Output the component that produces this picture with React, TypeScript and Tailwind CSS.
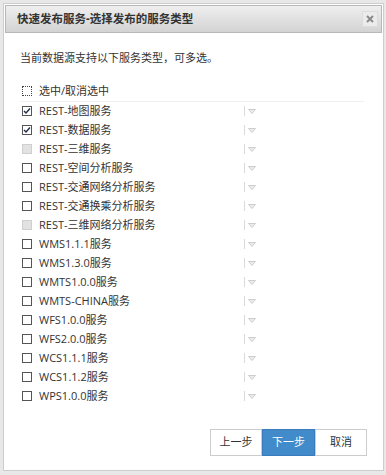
import React from 'react';

type Item = { label: string; state: 'on' | 'off' | 'disabled' };

const items: Item[] = [
  { label: 'REST-地图服务', state: 'on' },
  { label: 'REST-数据服务', state: 'on' },
  { label: 'REST-三维服务', state: 'disabled' },
  { label: 'REST-空间分析服务', state: 'off' },
  { label: 'REST-交通网络分析服务', state: 'off' },
  { label: 'REST-交通换乘分析服务', state: 'off' },
  { label: 'REST-三维网络分析服务', state: 'disabled' },
  { label: 'WMS1.1.1服务', state: 'off' },
  { label: 'WMS1.3.0服务', state: 'off' },
  { label: 'WMTS1.0.0服务', state: 'off' },
  { label: 'WMTS-CHINA服务', state: 'off' },
  { label: 'WFS1.0.0服务', state: 'off' },
  { label: 'WFS2.0.0服务', state: 'off' },
  { label: 'WCS1.1.1服务', state: 'off' },
  { label: 'WCS1.1.2服务', state: 'off' },
  { label: 'WPS1.0.0服务', state: 'off' },
];

const Box: React.FC<{ state: Item['state'] | 'focus' }> = ({ state }) => {
  if (state === 'disabled') {
    return <span className="block w-[10px] h-[10px] border border-[#cfcfcf] bg-[#e2e2e2]" />;
  }
  if (state === 'focus') {
    return <span className="block w-[10px] h-[10px] border border-dotted border-[#444]" />;
  }
  return (
    <span className="flex items-center justify-center w-[10px] h-[10px] border border-[#555] bg-white">
      {state === 'on' && (
        <svg width="8" height="8" viewBox="0 0 8 8">
          <path d="M1 4 L3 6 L7 1.5" fill="none" stroke="#1f2d4a" strokeWidth="1.4" />
        </svg>
      )}
    </span>
  );
};

const Caret = () => (
  <div className="flex items-center gap-[3px]">
    <span className="block w-px h-[10px] bg-[#dadada]" />
    <svg width="8" height="5" viewBox="0 0 8 5">
      <path d="M0.5 0.5 L7.5 0.5 L4 4.5 Z" fill="#ececec" stroke="#cdcdcd" strokeWidth="1" />
    </svg>
  </div>
);

export default function App() {
  return (
    <div
      className="w-[386px] h-[475px] bg-[#e8e8e8] pt-[3px] pl-[3px] pr-[2px] pb-[4px] text-[#333]"
      style={{ fontFamily: '"Open Sans", "Noto Sans CJK SC", sans-serif' }}
    >
      <div className="h-full bg-white border border-[#cdcdcd] p-px flex flex-col">
        {/* Title bar */}
        <div className="h-[28px] flex items-center justify-between border border-[#b8b8b8] bg-gradient-to-b from-[#efefef] to-[#d3d3d3] pl-[11px] pr-[3px]">
          <span className="text-[11.5px] font-bold leading-none">快速发布服务-选择发布的服务类型</span>
          <span className="flex items-center justify-center w-[16px] h-[16px] bg-[#ebebeb] border border-[#dcdcdc]">
            <svg width="8" height="8" viewBox="0 0 8 8">
              <path d="M1 1 L7 7 M7 1 L1 7" stroke="#8a8a8a" strokeWidth="2" />
            </svg>
          </span>
        </div>

        {/* Body */}
        <div className="flex flex-col text-[11px] pl-[15px]">
          <p className="mt-[15px] h-[19px] leading-[19px]">当前数据源支持以下服务类型，可多选。</p>

          <div className="mt-[15px] h-[20px] w-[344px] flex items-center border-b border-[#efefef] pb-px">
            <span className="ml-[2px]"><Box state="focus" /></span>
            <span className="ml-[7px]">选中/取消选中</span>
          </div>

          <div className="flex flex-col">
            {items.map((it) => (
              <div key={it.label} className="h-[19px] flex items-center pb-px">
                <span className="ml-[2px]"><Box state={it.state} /></span>
                <span className="ml-[7px] w-[205px] whitespace-nowrap">{it.label}</span>
                <Caret />
              </div>
            ))}
          </div>
        </div>

        {/* Footer */}
        <div className="mt-auto mb-[13px] pr-[15px] flex justify-end text-[11px]">
          <button className="w-[52px] h-[27px] border border-[#cccccc] bg-white text-[#333]">上一步</button>
          <button className="w-[53px] h-[27px] border border-[#3a7cbc] bg-[#428bca] text-white">下一步</button>
          <button className="w-[52px] h-[27px] border border-[#cccccc] bg-white text-[#333]">取消</button>
        </div>
      </div>
    </div>
  );
}
